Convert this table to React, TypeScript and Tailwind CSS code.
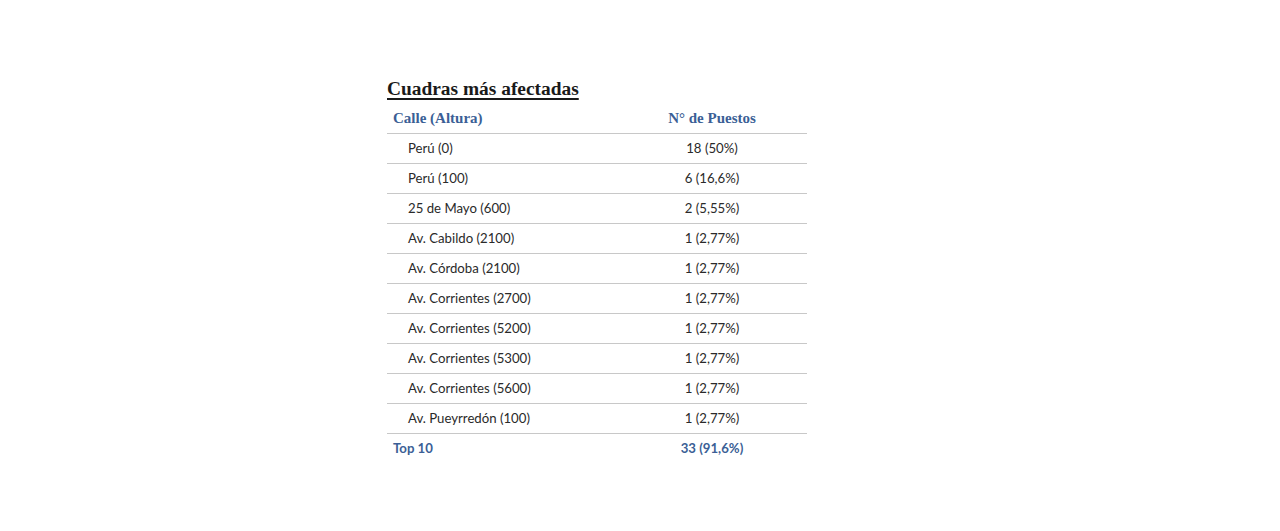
const rows: [string, string][] = [
  ['Perú (0)', '18 (50%)'],
  ['Perú (100)', '6 (16,6%)'],
  ['25 de Mayo (600)', '2 (5,55%)'],
  ['Av. Cabildo (2100)', '1 (2,77%)'],
  ['Av. Córdoba (2100)', '1 (2,77%)'],
  ['Av. Corrientes (2700)', '1 (2,77%)'],
  ['Av. Corrientes (5200)', '1 (2,77%)'],
  ['Av. Corrientes (5300)', '1 (2,77%)'],
  ['Av. Corrientes (5600)', '1 (2,77%)'],
  ['Av. Pueyrredón (100)', '1 (2,77%)'],
];

const App = () => {
  return (
    <div className="min-h-[531px] bg-white pt-[76px]">
      <div className="w-[420px] ml-[387px]">
        <h2 className="font-['Liberation_Serif',serif] font-bold text-[19.4px] leading-[26px] text-[#1a1a1a] underline underline-offset-[3px] decoration-[1.5px]">
          Cuadras más afectadas
        </h2>
        <table className="w-full border-collapse mt-[1px]">
          <thead>
            <tr className="border-b border-[#c8c8c8] h-[30px] font-['Liberation_Serif',serif] font-bold text-[15px] text-[#3b5f96]">
              <th className="w-[230px] text-left pl-[6px] pt-[1px] font-bold">Calle (Altura)</th>
              <th className="text-center pt-[1px] font-bold">N° de Puestos</th>
            </tr>
          </thead>
          <tbody className="font-['Lato',sans-serif] text-[13.2px] text-[#2a2a2a]">
            {rows.map(([calle, puestos]) => (
              <tr key={calle} className="border-b border-[#c8c8c8] h-[30px]">
                <td className="pl-[21px] pt-[2px]">{calle}</td>
                <td className="text-center pt-[2px]">{puestos}</td>
              </tr>
            ))}
            <tr className="h-[30px] font-bold text-[#3b5f96]">
              <td className="pl-[6px] pt-[2px]">Top 10</td>
              <td className="text-center pt-[2px]">33 (91,6%)</td>
            </tr>
          </tbody>
        </table>
      </div>
    </div>
  );
};

export default App;
